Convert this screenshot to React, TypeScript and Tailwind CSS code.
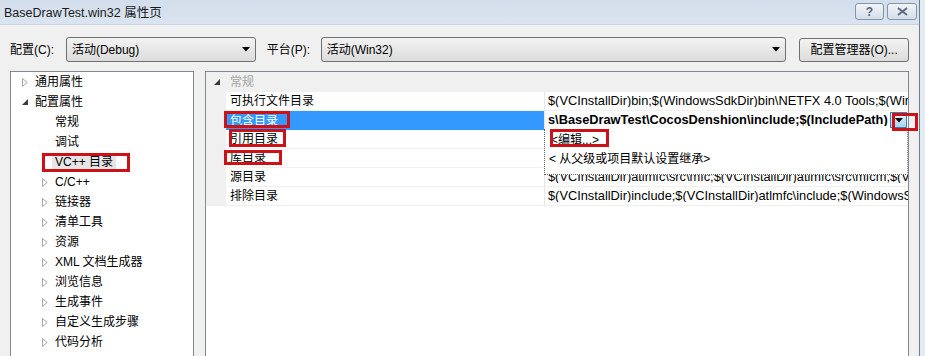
import React from "react";

const Tri = ({ open }: { open?: boolean }) =>
  open ? (
    <svg width="6" height="6" viewBox="0 0 6 6">
      <path d="M6 0 L6 6 L0 6 Z" fill="#3a3a3a" />
    </svg>
  ) : (
    <svg width="6" height="9" viewBox="0 0 6 9">
      <path d="M0.5 0.5 L5.2 4.5 L0.5 8.5 Z" fill="#ffffff" stroke="#a8a8a8" strokeWidth="1" />
    </svg>
  );

type Item = { t: string; lvl: 0 | 1; tri?: "c" | "o"; sel?: boolean };

const tree: Item[] = [
  { t: "通用属性", lvl: 0, tri: "c" },
  { t: "配置属性", lvl: 0, tri: "o" },
  { t: "常规", lvl: 1 },
  { t: "调试", lvl: 1 },
  { t: "VC++ 目录", lvl: 1, sel: true },
  { t: "C/C++", lvl: 1, tri: "c" },
  { t: "链接器", lvl: 1, tri: "c" },
  { t: "清单工具", lvl: 1, tri: "c" },
  { t: "资源", lvl: 1, tri: "c" },
  { t: "XML 文档生成器", lvl: 1, tri: "c" },
  { t: "浏览信息", lvl: 1, tri: "c" },
  { t: "生成事件", lvl: 1, tri: "c" },
  { t: "自定义生成步骤", lvl: 1, tri: "c" },
  { t: "代码分析", lvl: 1, tri: "c" },
];

type Row = { n: string; v: string; sel?: boolean };
const rows: Row[] = [
  { n: "可执行文件目录", v: "$(VCInstallDir)bin;$(WindowsSdkDir)bin\\NETFX 4.0 Tools;$(WindowsSdkDir)bin;$(VSInstallDir)Common7\\Tools\\bin" },
  { n: "包含目录", v: "s\\BaseDrawTest\\CocosDenshion\\include;$(IncludePath)", sel: true },
  { n: "引用目录", v: "$(VCInstallDir)atlmfc\\lib;$(VCInstallDir)lib" },
  { n: "库目录", v: "$(VCInstallDir)lib;$(VCInstallDir)atlmfc\\lib;$(WindowsSdkDir)lib" },
  { n: "源目录", v: "$(VCInstallDir)atlmfc\\src\\mfc;$(VCInstallDir)atlmfc\\src\\mfcm;$(VCInstallDir)atlmfc\\src\\atl;$(VCInstallDir)crt\\src" },
  { n: "排除目录", v: "$(VCInstallDir)include;$(VCInstallDir)atlmfc\\include;$(WindowsSdkDir)include;$(FrameworkSDKDir)\\include" },
];

const ComboArrow = () => (
  <svg width="8" height="5" viewBox="0 0 8 5">
    <path d="M0 0 L8 0 L4 4.5 Z" fill="#000" />
  </svg>
);

export default function App() {
  return (
    <div className="relative w-[925px] h-[356px] overflow-hidden bg-[#e4eaf1] font-['Liberation_Sans','Noto_Sans_CJK_SC',sans-serif] text-[12px] text-black leading-none">
      <div className="flex h-full">
        <div className="w-[920px] h-full shrink-0 border-r border-[#6f7f90] bg-[#f0f0f0] flex flex-col">
          {/* title bar */}
          <div className="h-[25px] shrink-0 flex items-center justify-between bg-gradient-to-b from-[#d3deec] to-[#dbe4f0] border-b border-[#c9d4e2]">
            <span className="pl-[4px] pt-[3px] text-[12.5px] text-[#1a1a1a]">BaseDrawTest.win32 属性页</span>
            <div className="flex gap-[3px] pr-[2px] self-start pt-[3px]">
              <div className="w-[29px] h-[17px] rounded-[3px] border border-[#8595a8] bg-gradient-to-b from-[#f1f4f8] to-[#d5dee9] flex items-center justify-center text-[12px] text-[#55657a] font-bold">?</div>
              <div className="w-[30px] h-[17px] rounded-[3px] border border-[#8595a8] bg-gradient-to-b from-[#f1f4f8] to-[#d5dee9] flex items-center justify-center">
                <svg width="11" height="9" viewBox="0 0 11 9">
                  <path d="M1 1 L10 8 M10 1 L1 8" stroke="#5b6b80" strokeWidth="2" fill="none" />
                </svg>
              </div>
            </div>
          </div>

          {/* body */}
          <div className="flex-1 min-h-0 px-[10px] pt-[12px] flex flex-col">
            <div className="h-[25px] shrink-0 flex items-center">
              <span className="w-[56px]">配置(C):</span>
              <div className="w-[190px] h-[25px] rounded-[3px] border border-[#707070] bg-gradient-to-b from-[#f3f3f3] to-[#dcdcdc] flex items-center justify-between pl-[5px] pr-[5px]">
                <span>活动(Debug)</span>
                <ComboArrow />
              </div>
              <span className="ml-[11px] w-[54px]">平台(P):</span>
              <div className="w-[466px] h-[25px] rounded-[3px] border border-[#707070] bg-gradient-to-b from-[#f3f3f3] to-[#dcdcdc] flex items-center justify-between pl-[5px] pr-[5px]">
                <span>活动(Win32)</span>
                <ComboArrow />
              </div>
              <div className="ml-[13px] w-[110px] h-[24px] rounded-[3px] border border-[#707070] bg-gradient-to-b from-[#f3f3f3] to-[#dcdcdc] flex items-center justify-center">
                配置管理器(O)...
              </div>
            </div>

            <div className="mt-[9px] shrink-0 flex gap-[11px] h-[300px]">
              {/* tree */}
              <div className="w-[186px] h-full border border-[#828790] bg-white">
                {tree.map((it) => (
                  <div key={it.t} className={`h-[20px] flex items-center ${it.lvl === 0 ? "pl-[11px]" : "pl-[31px]"}`}>
                    <div className="w-[10px] flex items-center">{it.tri ? <Tri open={it.tri === "o"} /> : null}</div>
                    <span className={`px-[3px] h-[16px] flex items-center ${it.sel ? "bg-[#e6e6e6]" : ""}`}>{it.t}</span>
                  </div>
                ))}
              </div>

              {/* property grid */}
              <div className="relative w-[704px] h-full border border-[#828790] bg-white">
                <div className="h-[20px] flex items-center bg-[#f0f0f0]">
                  <div className="w-[20px] flex justify-center pl-[2px]">
                    <Tri open />
                  </div>
                  <span className="pl-[4px] text-[#a3a3a3]">常规</span>
                </div>
                {rows.map((r) => (
                  <div key={r.n} className="h-[19px] flex">
                    <div className="w-[20px] bg-[#f0f0f0]" />
                    <div
                      className={`w-[319px] flex items-center pl-[4px] border-r border-[#e6e6e6] ${
                        r.sel ? "bg-[#3399ff] text-white" : "border-b border-b-[#f0f0f0]"
                      }`}
                    >
                      {r.n}
                    </div>
                    <div className={`flex-1 min-w-0 flex items-center pl-[3px] border-b border-b-[#f0f0f0] text-[12.8px] ${r.sel ? "font-bold pr-[1px]" : ""}`}>
                      <span className="flex-1 min-w-0 overflow-hidden whitespace-nowrap">{r.v}</span>
                      {r.sel ? (
                        <div className="w-[17px] h-[16px] border border-[#3c7fb1] bg-gradient-to-b from-[#e5f3fc] to-[#a7d3f2] flex items-center justify-center">
                          <svg width="8" height="5" viewBox="0 0 8 5">
                            <path d="M0 0 L8 0 L4 4.5 Z" fill="#000" />
                          </svg>
                        </div>
                      ) : null}
                    </div>
                  </div>
                ))}

                {/* dropdown popup */}
                <div className="absolute left-[338px] top-[57px] w-[364px] h-[46px] bg-white border-l border-b border-[#646464] border-r border-r-[#8a8a8a] border-dotted">
                  <div className="h-[19px] flex items-center pl-[6px] mt-[1px]">&lt;编辑...&gt;</div>
                  <div className="h-[19px] flex items-center pl-[4px]">&lt; 从父级或项目默认设置继承&gt;</div>
                </div>
              </div>
            </div>
          </div>
        </div>
      </div>

      {/* red annotation boxes */}
      <div className="absolute left-[42px] top-[153px] w-[88px] h-[19px] border-[3px] border-[#cc1219]" />
      <div className="absolute left-[224px] top-[111px] w-[66px] h-[17px] border-[3px] border-[#cc1219]" />
      <div className="absolute left-[229px] top-[129px] w-[57px] h-[18px] border-[3px] border-[#cc1219]" />
      <div className="absolute left-[224px] top-[150px] w-[58px] h-[15px] border-[3px] border-[#cc1219]" />
      <div className="absolute left-[892px] top-[113px] w-[26px] h-[18px] border-[3px] border-[#cc1219]" />
      <div className="absolute left-[550px] top-[129px] w-[59px] h-[18px] border-[3px] border-[#cc1219]" />
    </div>
  );
}
